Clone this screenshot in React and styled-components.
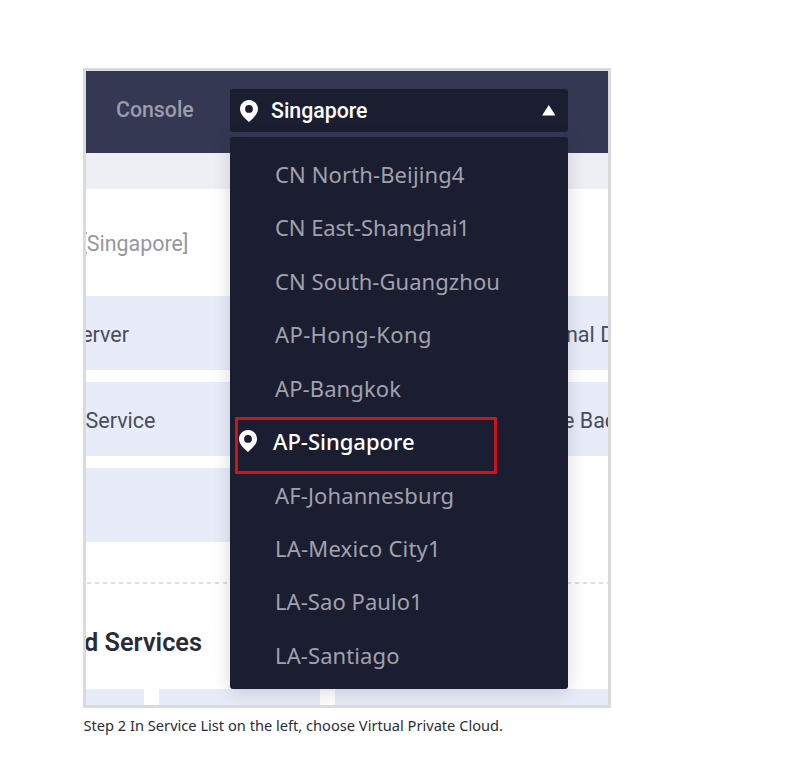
import React from "react";
import styled, { createGlobalStyle, css } from "styled-components";

const GlobalStyle = createGlobalStyle`
  * { box-sizing: border-box; }
  body { margin: 0; background: #fff; }
`;

const Page = styled.main`
  width: 786px;
  height: 767px;
  padding: 68px 0 0 83px;
  overflow: hidden;
  background: #fff;
`;

const Frame = styled.section`
  width: 528px;
  height: 640px;
  border: 3px solid #d9dadd;
  background: #fff;
  overflow: hidden;
  font-family: Roboto, sans-serif;
  font-size: 22px;
`;

const TopBar = styled.header`
  display: flex;
  align-items: flex-start;
  height: 82px;
  padding: 18px 0 0 30px;
  background: #343853;
`;

const ConsoleLink = styled.span`
  width: 114px;
  line-height: 41px;
  font-size: 21.3px;
  font-weight: 500;
  color: #9b9da9;
`;

const RegionSelect = styled.div`
  position: relative;
  z-index: 1;
  width: 338px;
`;

const SelectBox = styled.div`
  display: flex;
  align-items: center;
  height: 43px;
  padding: 0 13px 0 9.5px;
  border-radius: 3px;
  background: #1b1d31;
  color: #fff;
`;

const SelectLabel = styled.span`
  flex: 1;
  padding-left: 13.5px;
  font-size: 21.3px;
  font-weight: 500;
  line-height: 43px;
`;

const Menu = styled.ul`
  position: absolute;
  top: 48px;
  left: 0;
  width: 338px;
  height: 552px;
  margin: 0;
  padding: 10.2px 0 0;
  list-style: none;
  border-radius: 3px;
  background: #1b1d31;
  box-shadow: 0 3px 18px rgba(30, 32, 50, 0.17);
`;

const MenuItem = styled.li`
  display: flex;
  align-items: center;
  height: 53.45px;
  padding-left: 45px;
  font-family: "Noto Sans", sans-serif;
  font-size: 22px;
  letter-spacing: ${(p) => p.$spacing || 0}px;
  color: #a0a2ad;
  ${(p) =>
    p.$active &&
    css`
      width: 262px;
      height: 57px;
      margin: 3px 0 -6.55px 4.5px;
      padding: 0 0 10px 1.5px;
      border: 3px solid #c9151b;
      font-weight: 500;
      color: #fff;
    `}
`;

const ItemLabel = styled.span`
  padding-left: ${(p) => (p.$active ? 16 : 0)}px;
  white-space: nowrap;
`;

const Pin = styled.svg`
  flex: none;
  width: 18px;
  height: 22px;
`;

const Arrow = styled.svg`
  width: 13.500px;
  height: 10.500px;
`;

const Strip = styled.div`
  height: 36px;
  background: #eeeff4;
`;

const RegionTitle = styled.div`
  display: flex;
  justify-content: flex-end;
  width: 102.5px;
  height: 107px;
  font-size: 21.4px;
  line-height: 109px;
  white-space: nowrap;
  color: #96979d;
`;

const ServiceGrid = styled.div`
  display: grid;
  grid-template-columns: 240px 270px;
  grid-auto-rows: 74px;
  gap: 12px;
`;

const ServiceTile = styled.div`
  display: flex;
  justify-content: ${(p) => (p.$end ? "flex-end" : "flex-start")};
  padding-left: ${(p) => p.$left || 0}px;
  padding-right: ${(p) => p.$end || 0}px;
  overflow: hidden;
  font-size: 21.5px;
  line-height: 77px;
  white-space: nowrap;
  background: #e8ebf8;
  color: #4b4d5b;
`;

const Divider = styled.svg`
  display: block;
  width: 522px;
  height: 2px;
  margin-top: 40px;
`;

const Heading = styled.h2`
  display: flex;
  justify-content: flex-end;
  width: 116px;
  height: 105px;
  margin: 0;
  font-size: 25.3px;
  font-weight: 600;
  line-height: 117px;
  white-space: nowrap;
  color: #282b38;
`;

const CardRow = styled.div`
  display: grid;
  grid-template-columns: 58px 161px 1fr;
  gap: 15px;
  height: 17px;
`;

const Card = styled.div`
  background: #e8ebf8;
`;

const Caption = styled.p`
  margin: 6px 0 0 0.5px;
  font: 14.63px/22px "Noto Sans", sans-serif;
  color: #2a2d38;
`;

const regions = [
  { name: "CN North-Beijing4", spacing: 0.12 },
  { name: "CN East-Shanghai1", spacing: -0.06 },
  { name: "CN South-Guangzhou", spacing: 0.06 },
  { name: "AP-Hong-Kong", spacing: 0.38 },
  { name: "AP-Bangkok", spacing: 0.1 },
  { name: "AP-Singapore", active: true },
  { name: "AF-Johannesburg", spacing: 0.12 },
  { name: "LA-Mexico City1", spacing: 0.2 },
  { name: "LA-Sao Paulo1", spacing: 0.06 },
  { name: "LA-Santiago", spacing: 0.1 },
];

function PinIcon() {
  return (
    <Pin viewBox="0 0 18 22">
      <path
        fill="#fff"
        fillRule="evenodd"
        d="M9 0C4 0 0 4 0 9c0 5 4.500 9 9 13 4.500-4 9-8 9-13 0-5-4-9-9-9zm0 5a3.900 3.900 0 1 1 0 7.800 3.900 3.900 0 0 1 0-7.800z"
      />
    </Pin>
  );
}

export default function App() {
  return (
    <>
      <GlobalStyle />
      <Page>
        <Frame>
          <TopBar>
            <ConsoleLink>Console</ConsoleLink>
            <RegionSelect>
              <SelectBox>
                <PinIcon />
                <SelectLabel>Singapore</SelectLabel>
                <Arrow viewBox="0 0 14 11">
                  <path d="M7 0 14 11H0z" fill="#fff" />
                </Arrow>
              </SelectBox>
              <Menu>
                {regions.map(({ name, active, spacing }) => (
                  <MenuItem key={name} $active={active} $spacing={spacing}>
                    {active && <PinIcon />}
                    <ItemLabel $active={active}>{name}</ItemLabel>
                  </MenuItem>
                ))}
              </Menu>
            </RegionSelect>
          </TopBar>
          <Strip />
          <RegionTitle>[Singapore]</RegionTitle>
          <ServiceGrid>
            <ServiceTile $end={197}>erver</ServiceTile>
            <ServiceTile $left={228}>nal D</ServiceTile>
            <ServiceTile $end={170.5}>Service</ServiceTile>
            <ServiceTile $left={225}>e Bac</ServiceTile>
            <ServiceTile />
          </ServiceGrid>
          <Divider viewBox="0 0 522 2">
            <path d="M1 1H522" stroke="#dcdde0" strokeWidth="2" strokeDasharray="4 4" />
          </Divider>
          <Heading>d Services</Heading>
          <CardRow>
            <Card />
            <Card />
            <Card />
          </CardRow>
        </Frame>
        <Caption>Step 2 In Service List on the left, choose Virtual Private Cloud.</Caption>
      </Page>
    </>
  );
}
